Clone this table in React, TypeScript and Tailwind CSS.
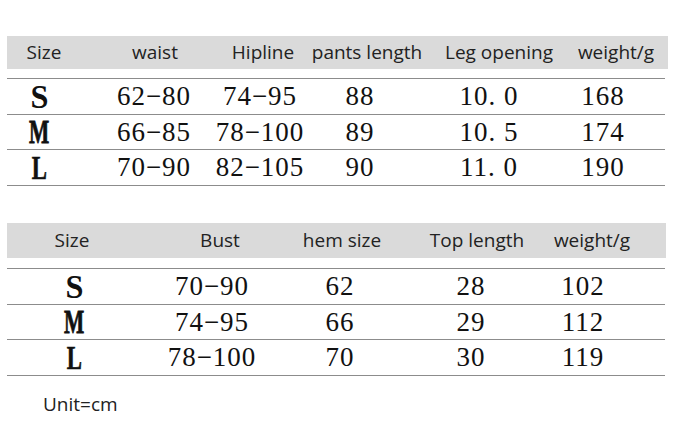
import React from "react";

const sans = { fontFamily: '"Open Sans", "Noto Sans", sans-serif' };
const serifStyle = { fontFamily: '"Liberation Serif", "Times New Roman", serif' };

function HCell({ w, children }: { w: string; children: React.ReactNode }) {
  return (
    <div className={`${w} shrink-0 flex justify-center whitespace-nowrap`}>{children}</div>
  );
}

const letterScale: Record<string, string> = {
  S: "scale-x-[0.95]",
  M: "scale-x-[0.63] [-webkit-text-stroke:0.8px_#111]",
  L: "scale-x-[0.67] [-webkit-text-stroke:0.6px_#111]",
};

function Letter({ ch }: { ch: string }) {
  return (
    <span
      className={`${letterScale[ch]} font-bold text-[34px] leading-none inline-block text-[#111]`}
      style={serifStyle}
    >
      {ch}
    </span>
  );
}

function Num({ v }: { v: string }) {
  return (
    <span className="text-[27px] leading-none tracking-[1px] text-[#111]" style={serifStyle}>
      {v}
    </span>
  );
}

export default function App() {
  const top = [
    ["S", "62−80", "74−95", "88", "10.\u00a00", "168"],
    ["M", "66−85", "78−100", "89", "10.\u00a05", "174"],
    ["L", "70−90", "82−105", "90", "11.\u00a00", "190"],
  ];
  const bottom = [
    ["S", "70−90", "62", "28", "102"],
    ["M", "74−95", "66", "29", "112"],
    ["L", "78−100", "70", "30", "119"],
  ];
  const topH = ["h-[35px]", "h-[34px]", "h-[35px]"];
  return (
    <div className="w-[678px] h-[427px] bg-white overflow-hidden pt-[36px] pl-[7px]">
      {/* table 1 header */}
      <div
        className="h-[33px] w-[661px] bg-[#dadada] flex items-center text-[19px] text-[#222]"
        style={sans}
      >
        <HCell w="w-[74px]">Size</HCell>
        <HCell w="w-[148px]">waist</HCell>
        <HCell w="w-[68px]">Hipline</HCell>
        <HCell w="w-[140px]">pants length</HCell>
        <HCell w="w-[124px]">Leg opening</HCell>
        <HCell w="w-[110px]">weight/g</HCell>
      </div>
      <div className="mt-[9px] w-[658px] border-t border-[#8c8c8c]">
        {top.map((r, i) => (
          <div
            key={i}
            className={`${topH[i]} box-content flex items-center border-b border-[#8c8c8c]`}
          >
            <HCell w="w-[64px]">
              <Letter ch={r[0]} />
            </HCell>
            <HCell w="w-[166px]">
              <Num v={r[1]} />
            </HCell>
            <HCell w="w-[46px]">
              <Num v={r[2]} />
            </HCell>
            <HCell w="w-[154px]">
              <Num v={r[3]} />
            </HCell>
            <HCell w="w-[104px]">
              <Num v={r[4]} />
            </HCell>
            <HCell w="w-[124px]">
              <Num v={r[5]} />
            </HCell>
          </div>
        ))}
      </div>

      {/* table 2 header */}
      <div
        className="mt-[37px] h-[35px] w-[659px] bg-[#dadada] flex items-center text-[19px] text-[#222]"
        style={sans}
      >
        <HCell w="w-[130px]">Size</HCell>
        <HCell w="w-[166px]">Bust</HCell>
        <HCell w="w-[78px]">hem size</HCell>
        <HCell w="w-[192px]">Top length</HCell>
        <HCell w="w-[38px]">weight/g</HCell>
      </div>
      <div className="mt-[10px] w-[658px] border-t border-[#8c8c8c]">
        {bottom.map((r, i) => (
          <div
            key={i}
            className={`${topH[i]} box-content flex items-center border-b border-[#8c8c8c]`}
          >
            <HCell w="w-[134px]">
              <Letter ch={r[0]} />
            </HCell>
            <HCell w="w-[142px]">
              <Num v={r[1]} />
            </HCell>
            <HCell w="w-[114px]">
              <Num v={r[2]} />
            </HCell>
            <HCell w="w-[148px]">
              <Num v={r[3]} />
            </HCell>
            <HCell w="w-[76px]">
              <Num v={r[4]} />
            </HCell>
          </div>
        ))}
      </div>

      <div className="mt-[15px] pl-[36px] text-[19px] leading-[26px] text-[#222]" style={sans}>
        Unit=cm
      </div>
    </div>
  );
}
